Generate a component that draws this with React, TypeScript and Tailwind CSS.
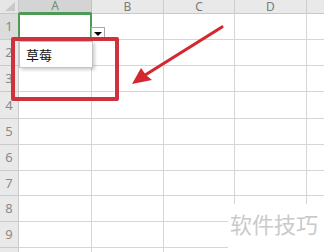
const cols = [
  { name: "A", w: "w-[73px]" },
  { name: "B", w: "w-[72px]" },
  { name: "C", w: "w-[71px]" },
  { name: "D", w: "w-[72px]" },
];

const rows = [
  { n: 1, h: "h-[26px]" },
  { n: 2, h: "h-[26px]" },
  { n: 3, h: "h-[26px]" },
  { n: 4, h: "h-[27px]" },
  { n: 5, h: "h-[26px]" },
  { n: 6, h: "h-[26px]" },
  { n: 7, h: "h-[25px]" },
  { n: 8, h: "h-[26px]" },
  { n: 9, h: "h-[26px]" },
  { n: 10, h: "h-[26px]" },
];

export default function App() {
  return (
    <div
      className="relative w-[324px] h-[252px] overflow-hidden bg-white"
      style={{ fontFamily: '"Noto Sans", "Noto Sans CJK SC", sans-serif' }}
    >
      {/* Column headers */}
      <div className="flex h-[14px]">
        <div className="relative w-[19px] shrink-0 bg-[#e6e6e6] border-r border-b border-[#c8c8c8]">
          <div className="absolute right-[3px] bottom-[2px] w-0 h-0 border-l-[10px] border-l-transparent border-b-[9px] border-b-[#c9c9c9]" />
        </div>
        {cols.map((c) => (
          <div
            key={c.name}
            className={`${c.w} shrink-0 flex items-center justify-center text-[12px] leading-none border-r ${
              c.name === "A"
                ? "bg-[#d4d4d4] text-[#6f8f70] border-[#c0c0c0] border-b-2 border-b-[#4f9a57]"
                : "bg-[#e9e9e9] text-[#7a7a7a] border-[#cdcdcd] border-b border-b-[#c8c8c8]"
            }`}
          >
            {c.name}
          </div>
        ))}
        <div className="flex-1 bg-[#e9e9e9] border-b border-[#c8c8c8]" />
      </div>

      {/* Rows */}
      {rows.map((r) => (
        <div key={r.n} className={`flex ${r.h}`}>
          <div
            className={`w-[19px] shrink-0 flex items-center justify-center text-[13px] leading-none border-r border-b border-[#cacaca] ${
              r.n === 1 ? "bg-[#dcdcdc] text-[#7a917a]" : "bg-[#e9e9e9] text-[#8a8a8a]"
            }`}
          >
            {r.n}
          </div>
          {cols.map((c) => (
            <div key={c.name} className={`${c.w} shrink-0 border-r border-b border-[#d6d6d6]`} />
          ))}
          <div className="flex-1 border-b border-[#d6d6d6]" />
        </div>
      ))}

      {/* Active cell A1 */}
      <div className="absolute left-[18px] top-[13px] w-[74px] h-[28px] border-2 border-[#4f9a57]" />

      {/* Dropdown button */}
      <div className="absolute left-[91px] top-[27px] w-[14px] h-[13px] bg-white border border-[#a8a8a8] flex items-center justify-center">
        <div className="w-0 h-0 border-l-[4px] border-r-[4px] border-t-[4px] border-l-transparent border-r-transparent border-t-black" />
      </div>

      {/* Dropdown list */}
      <div className="absolute left-[19px] top-[41px] w-[74px] h-[27px] bg-white border border-[#c4c4c4] shadow-[2px_2px_3px_rgba(0,0,0,0.18)] flex items-center pl-[6px]">
        <span
          className="text-[13px] text-[#111]"
          style={{ fontFamily: '"Noto Sans CJK SC", sans-serif' }}
        >
          草莓
        </span>
      </div>

      {/* Red highlight box */}
      <div className="absolute left-[11px] top-[37px] w-[108px] h-[64px] border-4 border-[#d0323d] rounded-[2px]" />

      {/* Arrow */}
      <svg className="absolute left-0 top-0" width="324" height="252" viewBox="0 0 324 252">
        <line x1="222" y1="27" x2="142" y2="77" stroke="#d3282f" strokeWidth="3.2" strokeLinecap="round" />
        <polygon points="132,84 141,68 146,75 152,80" fill="#d3282f" />
      </svg>

      {/* Watermark */}
      <div className="absolute left-[228px] top-[204px] right-0 bottom-0 bg-white flex items-start">
        <span
          className="mt-[5px] ml-[2px] text-[22px] leading-[28px] text-[#cacaca]"
          style={{ fontFamily: '"Noto Sans CJK SC", sans-serif' }}
        >
          软件技巧
        </span>
      </div>
    </div>
  );
}
